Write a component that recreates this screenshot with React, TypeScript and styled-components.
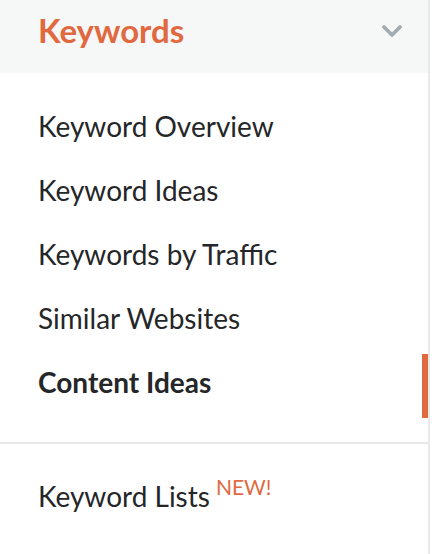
import styled, { createGlobalStyle } from "styled-components";

const GlobalStyle = createGlobalStyle`
  html, body {
    margin: 0;
    padding: 0;
    background: #fff;
  }
  body {
    font-family: Lato, "Noto Sans", sans-serif;
  }
`;

const items = [
  { label: "Keyword Overview" },
  { label: "Keyword Ideas" },
  { label: "Keywords by Traffic" },
  { label: "Similar Websites" },
  { label: "Content Ideas", active: true },
];

export default function App() {
  return (
    <>
      <GlobalStyle />
      <Sidebar>
        <Header>
          <HeaderTitle>Keywords</HeaderTitle>
          <Chevron viewBox="0 0 20 13" aria-hidden>
            <path d="M2 2 L10 10 L18 2" />
          </Chevron>
        </Header>
        <List>
          {items.map((it) => (
            <Item key={it.label} $active={!!it.active}>
              {it.label}
            </Item>
          ))}
        </List>
        <Divider />
        <Footer>
          <Item $active={false}>
            Keyword Lists<New>NEW!</New>
          </Item>
        </Footer>
      </Sidebar>
    </>
  );
}

const Sidebar = styled.div`
  width: 428px;
  height: 554px;
  border-right: 2px solid #e9e9e9;
  background: #fff;
  display: flex;
  flex-direction: column;
`;
const Header = styled.div`
  height: 73px;
  background: #f6f7f7;
  display: flex;
  align-items: flex-start;
  justify-content: space-between;
  padding: 10px 26px 0 38px;
  box-sizing: border-box;
`;
const HeaderTitle = styled.div`
  color: #e0693f;
  font-size: 33px;
  font-weight: 700;
`;
const Chevron = styled.svg`
  width: 20px;
  height: 13px;
  margin-top: 15px;
  fill: none;
  stroke: #a3acb1;
  stroke-width: 3.8;
  stroke-linecap: round;
  stroke-linejoin: round;
`;
const List = styled.div`
  display: flex;
  flex-direction: column;
  padding: 21px 0 28px;
`;
const Item = styled.div<{ $active: boolean }>`
  position: relative;
  height: 64px;
  display: flex;
  align-items: center;
  padding-left: 38px;
  font-size: 28px;
  color: #252628;
  font-weight: ${(p) => (p.$active ? 700 : 400)};
  &::after {
    content: "";
    display: ${(p) => (p.$active ? "block" : "none")};
    position: absolute;
    right: 0;
    top: 4px;
    width: 6px;
    height: 64px;
    background: #e0693f;
  }
`;
const Divider = styled.div`
  height: 2px;
  background: #e9e9e9;
`;
const Footer = styled.div`
  padding-top: 20px;
`;
const New = styled.span`
  color: #e0693f;
  font-size: 21px;
  margin-left: 6px;
  position: relative;
  top: -10px;
`;
